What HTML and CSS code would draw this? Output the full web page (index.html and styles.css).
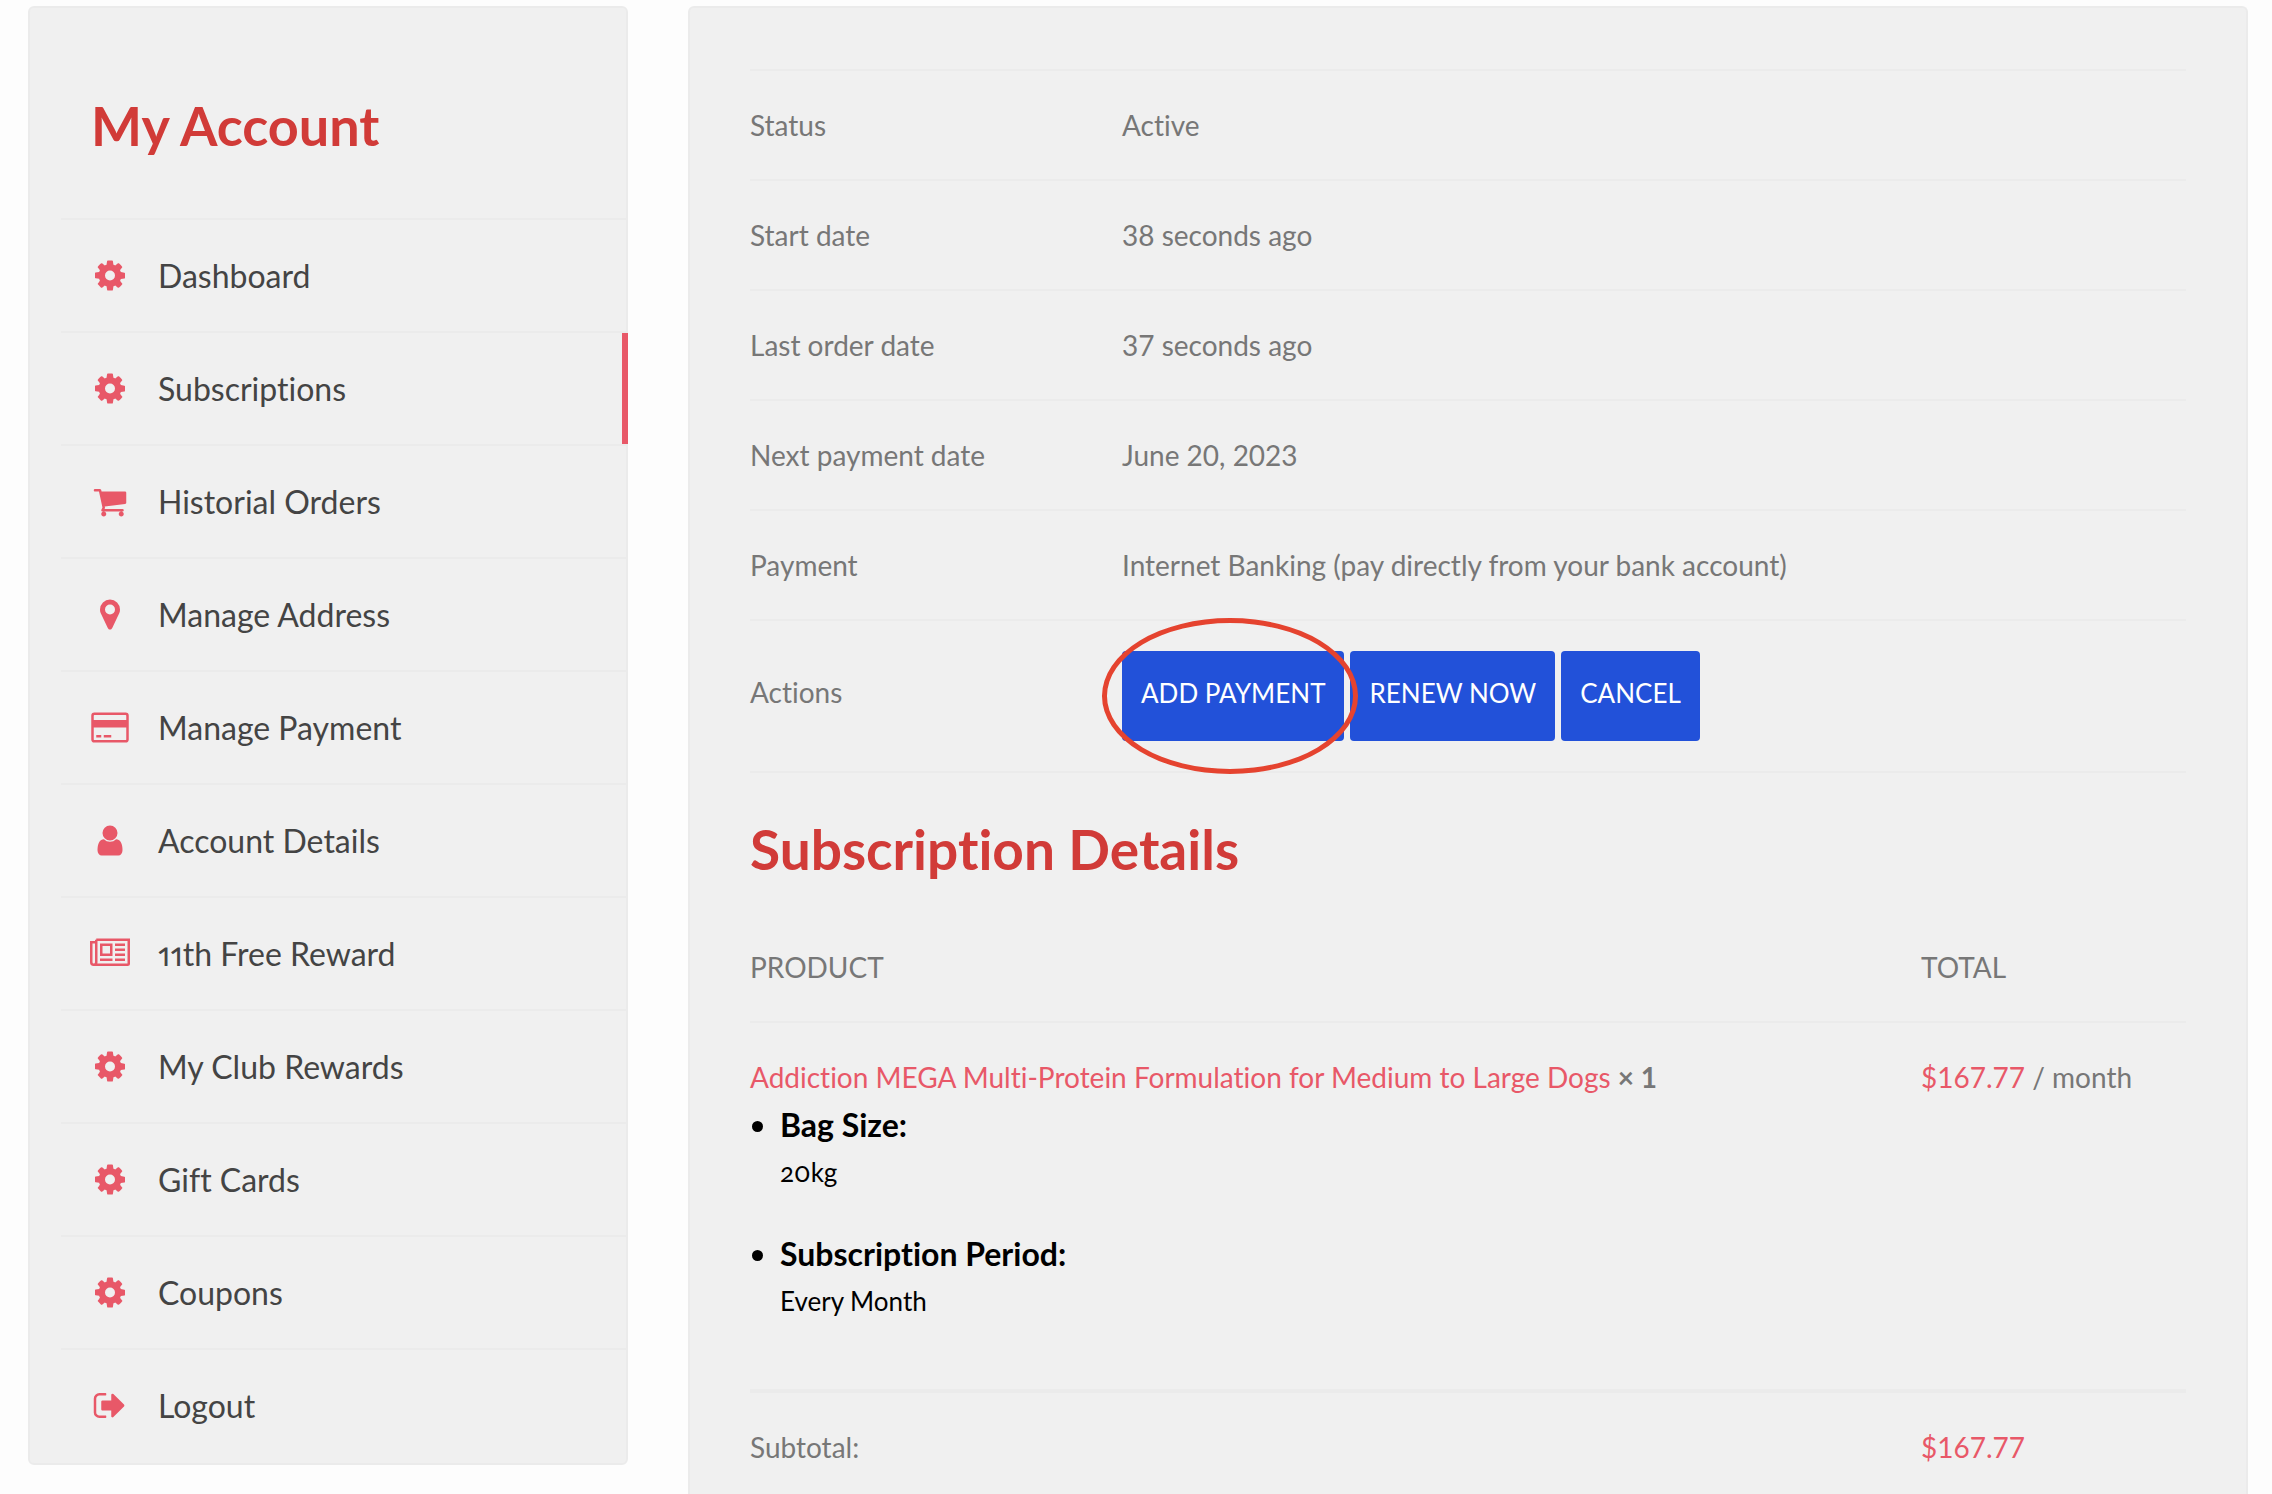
FILE: index.html
```html
<!DOCTYPE html>
<html lang="en">

<head>
    <meta charset="UTF-8">
    <meta name="viewport" content="width=device-width, initial-scale=1.0">
    <title>My Account</title>
    <link rel="stylesheet" href="styles.css">
</head>

<body>
    <svg class="sprite" aria-hidden="true">
        <symbol id="cog" viewBox="-128 0 2048 1792">
            <path d="M1152 896q0-106-75-181t-181-75-181 75-75 181 75 181 181 75 181-75 75-181zm512-109v222q0 12-8 23t-20 13l-185 28q-19 54-39 91 35 50 107 138 10 12 10 25t-9 23q-27 37-99 108t-94 71q-12 0-26-9l-138-108q-44 23-91 38-16 136-29 186-7 28-36 28h-222q-14 0-24.5-8.5t-11.5-21.5l-28-184q-49-16-90-37l-141 107q-10 9-25 9-14 0-25-11-126-114-165-168-7-10-7-23 0-12 8-23 15-21 51-66.5t54-70.5q-27-50-41-99l-183-27q-13-2-21-12.5t-8-23.5v-222q0-12 8-23t19-13l186-28q14-46 39-92-40-57-107-138-10-12-10-24 0-10 9-23 26-36 98.5-107.5t94.5-71.5q13 0 26 10l138 107q44-23 91-38 16-136 29-186 7-28 36-28h222q14 0 24.5 8.5t11.5 21.5l28 184q49 16 90 37l142-107q9-9 24-9 13 0 25 10 129 119 165 170 7 8 7 22 0 12-8 23-15 21-51 66.5t-54 70.5q26 50 41 98l183 28q13 2 21 12.5t8 23.5z" />
        </symbol>
        <symbol id="cart" viewBox="-128 0 2048 1792">
            <path d="M704 1536q0 52-38 90t-90 38-90-38-38-90 38-90 90-38 90 38 38 90zm896 0q0 52-38 90t-90 38-90-38-38-90 38-90 90-38 90 38 38 90zm128-1088v512q0 24-16.5 42.5t-40.5 21.5l-1044 122q13 60 13 70 0 16-24 64h920q26 0 45 19t19 45-19 45-45 19h-1024q-26 0-45-19t-19-45q0-11 8-31.5t16-36 21.5-40 15.5-29.5l-177-823h-204q-26 0-45-19t-19-45 19-45 45-19h256q16 0 28.5 6.5t19.5 15.5 13 24.5 8 26 5.5 29.5 4.5 26h1201q26 0 45 19t19 45z" />
        </symbol>
        <symbol id="marker" viewBox="-128 0 2048 1792">
            <path d="M1152 640q0-106-75-181t-181-75-181 75-75 181 75 181 181 75 181-75 75-181zm256 0q0 109-33 179l-364 774q-16 33-47.5 52t-67.5 19-67.5-19-46.5-52l-365-774q-33-70-33-179 0-212 150-362t362-150 362 150 150 362z" />
        </symbol>
        <symbol id="card" viewBox="-128 0 2048 1792">
            <rect x="0" y="192" width="1792" height="1408" rx="96" fill="none" stroke="currentColor" stroke-width="128" />
            <path d="M0 512h1792v384h-1792zM192 1280h256v128h-256zM576 1280h384v128h-384z" />
        </symbol>
        <symbol id="user" viewBox="-128 0 2048 1792">
            <path d="M1536 1399q0 109-62.5 187t-150.5 78h-854q-88 0-150.5-78t-62.5-187q0-85 8.5-160.5t31.5-152 58.5-131 94-89 134.5-34.5q131 128 313 128t313-128q76 0 134.5 34.5t94 89 58.5 131 31.5 152 8.5 160.5zm-256-887q0 159-112.5 271.5t-271.5 112.5-271.5-112.5-112.5-271.5 112.5-271.5 271.5-112.5 271.5 112.5 112.5 271.5z" />
        </symbol>
        <symbol id="news" viewBox="0 -128 2048 1792">
            <g fill="none" stroke="currentColor" stroke-width="128">
                <path d="M320 64h1664v1216q0 64-64 64h-1728q-128 0-128-128v-1024h256M320 64v1152q0 128-128 128" />
                <path d="M576 320h512v512h-512zM512 1088h640M1280 320h512M1280 576h512M1280 832h512M1280 1088h512" />
            </g>
        </symbol>
        <symbol id="logout" viewBox="-128 0 2048 1792">
            <path d="M704 1440q0 4 1 20t.5 26.5-3 23.5-10 19.5-20.5 6.5h-320q-119 0-203.5-84.5t-84.5-203.5v-704q0-119 84.5-203.5t203.5-84.5h320q13 0 22.5 9.5t9.5 22.5q0 4 1 20t.5 26.5-3 23.5-10 19.5-20.5 6.5h-320q-66 0-113 47t-47 113v704q0 66 47 113t113 47h312l11.5 1 11.5 3 8 5.5 7 9 2 13.5zm928-544q0 26-19 45l-544 544q-19 19-45 19t-45-19-19-45v-288h-448q-26 0-45-19t-19-45v-384q0-26 19-45t45-19h448v-288q0-26 19-45t45-19 45 19l544 544q19 19 19 45z" />
        </symbol>
    </svg>

    <div class="page">
        <aside class="panel sidebar">
            <h2 class="sidebar-title">My Account</h2>
            <nav>
                <ul class="menu">
                    <li class="menu-item"><a href="#"><svg class="icon"><use href="#cog" /></svg>Dashboard</a></li>
                    <li class="menu-item active"><a href="#"><svg class="icon"><use href="#cog" /></svg>Subscriptions</a></li>
                    <li class="menu-item"><a href="#"><svg class="icon"><use href="#cart" /></svg>Historial Orders</a></li>
                    <li class="menu-item"><a href="#"><svg class="icon"><use href="#marker" /></svg>Manage Address</a></li>
                    <li class="menu-item"><a href="#"><svg class="icon"><use href="#card" /></svg>Manage Payment</a></li>
                    <li class="menu-item"><a href="#"><svg class="icon"><use href="#user" /></svg>Account Details</a></li>
                    <li class="menu-item"><a href="#"><svg class="icon"><use href="#news" /></svg>11th Free Reward</a></li>
                    <li class="menu-item"><a href="#"><svg class="icon"><use href="#cog" /></svg>My Club Rewards</a></li>
                    <li class="menu-item"><a href="#"><svg class="icon"><use href="#cog" /></svg>Gift Cards</a></li>
                    <li class="menu-item"><a href="#"><svg class="icon"><use href="#cog" /></svg>Coupons</a></li>
                    <li class="menu-item"><a href="#"><svg class="icon"><use href="#logout" /></svg>Logout</a></li>
                </ul>
            </nav>
        </aside>

        <main class="panel content">
            <table class="info">
                <tbody>
                    <tr>
                        <th scope="row">Status</th>
                        <td>Active</td>
                    </tr>
                    <tr>
                        <th scope="row">Start date</th>
                        <td>38 seconds ago</td>
                    </tr>
                    <tr>
                        <th scope="row">Last order date</th>
                        <td>37 seconds ago</td>
                    </tr>
                    <tr>
                        <th scope="row">Next payment date</th>
                        <td>June 20, 2023</td>
                    </tr>
                    <tr>
                        <th scope="row">Payment</th>
                        <td>Internet Banking (pay directly from your bank account)</td>
                    </tr>
                    <tr>
                        <th scope="row">Actions</th>
                        <td>
                            <div class="actions">
                                <div class="marked">
                                    <button type="button" class="btn">ADD PAYMENT</button>
                                    <span class="ring"></span>
                                </div>
                                <button type="button" class="btn">RENEW NOW</button>
                                <button type="button" class="btn">CANCEL</button>
                            </div>
                        </td>
                    </tr>
                </tbody>
            </table>

            <h2 class="content-title">Subscription Details</h2>

            <table class="order">
                <thead>
                    <tr>
                        <th scope="col">PRODUCT</th>
                        <th scope="col" class="total">TOTAL</th>
                    </tr>
                </thead>
                <tbody>
                    <tr>
                        <td>
                            <a href="#">Addiction MEGA Multi-Protein Formulation for Medium to Large Dogs</a> <strong>× 1</strong>
                            <ul class="meta">
                                <li><strong>Bag Size:</strong>
                                    <p>20kg</p>
                                </li>
                                <li><strong>Subscription Period:</strong>
                                    <p>Every Month</p>
                                </li>
                            </ul>
                        </td>
                        <td><span class="price">$167.77</span> / month</td>
                    </tr>
                </tbody>
                <tfoot>
                    <tr>
                        <th scope="row">Subtotal:</th>
                        <td><span class="price">$167.77</span></td>
                    </tr>
                </tfoot>
            </table>
        </main>
    </div>
</body>

</html>
```

FILE: styles.css
```css
* {
    margin: 0;
    padding: 0;
    box-sizing: border-box;
}

body {
    background: #fdfdfd;
    color: #777;
    font-family: Lato, "Open Sans", sans-serif;
    font-size: 28px;
    font-variant-ligatures: none;
    line-height: 48px;
}

a {
    text-decoration: none;
    color: #e85868;
}

.sprite {
    display: none;
}

.page {
    display: grid;
    grid-template-columns: 600fr 1560fr;
    gap: 60px;
    min-height: 100vh;
    padding: 6px 24px 0 28px;
}

.panel {
    background: #f0f0f0;
    border: 2px solid #ebebeb;
    border-radius: 6px;
}

/* sidebar */
.sidebar {
    align-self: start;
    padding-left: 31px;
    padding-bottom: 2px;
}

.sidebar-title {
    padding: 86px 30px 60px;
    color: #d13b38;
    font-size: 54px;
    font-weight: 700;
    line-height: 64px;
}

.menu {
    list-style: none;
}

.menu-item {
    border-top: 2px solid #ebebeb;
}

.menu-item a {
    display: flex;
    align-items: center;
    gap: 28px;
    height: 111px;
    padding-left: 29px;
    color: #444;
    font-size: 32px;
    font-variant-numeric: oldstyle-nums proportional-nums;
}

.menu-item.active {
    margin-right: -2px;
}

.menu-item.active a {
    border-right: 6px solid #e85868;
}

.icon {
    width: 40px;
    height: 35px;
    color: #e85868;
    fill: currentColor;
}

/* content */
.content {
    padding: 61px 60px 0;
    border-bottom: 0;
    border-radius: 6px 6px 0 0;
}

table {
    width: 100%;
    border-collapse: collapse;
    table-layout: fixed;
}

th,
td {
    text-align: left;
    vertical-align: baseline;
    font-weight: 400;
}

.info {
    border-top: 2px solid #ebebeb;
}

.info th,
.info td {
    padding: 30px 0;
    border-bottom: 2px solid #ebebeb;
}

.info th {
    width: 372px;
}

.actions {
    display: flex;
    gap: 6px;
}

.marked {
    position: relative;
}

.btn {
    padding: 18px 19px 24px;
    border: 0;
    border-radius: 4px;
    background: #2251d9;
    color: #fff;
    font: inherit;
    font-size: 26px;
    cursor: pointer;
}

/* ellipse drawn over the first button */
.ring {
    position: absolute;
    inset: -33px -14px -33px -20px;
    border: 5px solid #e5432f;
    border-radius: 50%;
    pointer-events: none;
}

.content-title {
    margin: 42px 0 30px;
    color: #d13b38;
    font-size: 55px;
    font-weight: 700;
    line-height: 68px;
}

.order th,
.order td {
    padding: 30px 0;
}

.order thead th {
    border-bottom: 2px solid #ebebeb;
}

.order .total {
    width: 265px;
}

.order tfoot {
    border-top: 4px solid #ebebeb;
}

.order tfoot th,
.order tfoot td {
    padding-bottom: 0;
}

.order td strong {
    font-weight: 700;
}

.price {
    color: #e85868;
}

.meta {
    padding-left: 30px;
    color: #000;
    font-size: 32px;
    font-variant-numeric: oldstyle-nums proportional-nums;
}

.meta li {
    margin-bottom: 35px;
}

.meta p {
    font-size: 26px;
    line-height: 46px;
}
```
